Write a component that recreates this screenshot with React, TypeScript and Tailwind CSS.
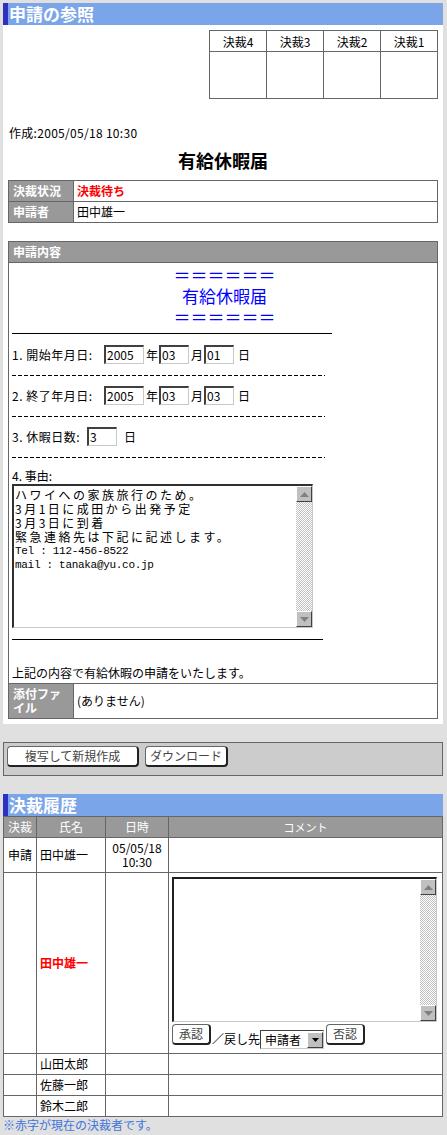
import React from 'react';

const font = "font-['Noto_Sans_CJK_JP','Noto_Sans_CJK_SC',sans-serif]";

function Field({ value, w }: { value: string; w: string }) {
  return (
    <span
      className={`inline-block h-[19px] ${w} border-t-2 border-l-2 border-[#404040] border-b border-r border-b-[#c8c8c8] border-r-[#c8c8c8] bg-white pl-[1px] text-[12px] leading-[16px]`}
    >
      {value}
    </span>
  );
}

function Arrow({ down }: { down?: boolean }) {
  return (
    <div className="flex h-[16px] w-[16px] shrink-0 items-center justify-center border border-t-white border-l-white border-b-[#404040] border-r-[#404040] bg-[#c0c0c0]">
      <svg width="9" height="5" viewBox="0 0 9 5">
        {down ? (
          <polygon points="0,0 9,0 4.5,5" fill="#808080" />
        ) : (
          <polygon points="0,5 9,5 4.5,0" fill="#808080" />
        )}
      </svg>
    </div>
  );
}

function ScrollBar() {
  return (
    <div className="flex w-[16px] shrink-0 flex-col">
      <Arrow />
      <div className="flex-1 bg-[repeating-conic-gradient(#c0c0c0_0%_25%,#ffffff_0%_50%)] bg-[length:2px_2px]" />
      <Arrow down />
    </div>
  );
}

function Btn({ children, w }: { children: React.ReactNode; w: string }) {
  return (
    <span
      className={`inline-flex h-[21px] ${w} shrink-0 items-center justify-center rounded-[4px] border border-[#666] border-b-2 border-r-2 border-b-[#222] border-r-[#222] bg-white text-[12px] text-[#444]`}
    >
      {children}
    </span>
  );
}

function TitleBar({ text }: { text: string }) {
  return (
    <div className="h-[22px] border-l-[5px] border-[#2f2fc4] bg-[#7ba5e9] pl-[1px] text-[17px] leading-[22px] font-bold text-white">
      {text}
    </div>
  );
}

function Dashes() {
  return (
    <div className="flex h-[20px] items-center">
      <div className="h-px w-[313px] bg-[repeating-linear-gradient(90deg,#000_0px_4px,transparent_4px_6px)]" />
    </div>
  );
}

export default function App() {
  const reason = [
    { t: 'ハワイへの家族旅行のため。', cjk: true },
    { t: '3月1日に成田から出発予定', cjk: true },
    { t: '3月3日に到着', cjk: true },
    { t: '緊急連絡先は下記に記述します。', cjk: true },
    { t: 'Tel  : 112-456-8522', cjk: false },
    { t: 'mail : tanaka@yu.co.jp', cjk: false },
  ];

  return (
    <div className={`min-h-screen w-[447px] bg-[#e0e0e0] pl-[3px] pt-[3px] text-[12px] text-black ${font}`}>
      {/* 申請の参照 */}
      <div className="w-[440px] bg-white pb-[5px]">
        <TitleBar text="申請の参照" />

        <div className="flex justify-end pr-[5px] pt-[5px]">
          <table className="border-collapse">
            <tbody>
              <tr>
                {['決裁4', '決裁3', '決裁2', '決裁1'].map((s) => (
                  <td key={s} className="h-[21px] w-[57px] border border-[#666] p-0 text-center leading-[19px]">
                    {s}
                  </td>
                ))}
              </tr>
              <tr>
                {[0, 1, 2, 3].map((i) => (
                  <td key={i} className="h-[47px] border border-[#666] p-0" />
                ))}
              </tr>
            </tbody>
          </table>
        </div>

        <div className="mt-[26px] pl-[6px] leading-[16px] tracking-[0.3px]">作成:2005/05/18 10:30</div>
        <div className="mt-[8px] text-center text-[18px] leading-[22px] font-bold">有給休暇届</div>

        <div className="mt-[9px] px-[5px]">
          <table className="w-full border-collapse">
            <tbody>
              <tr>
                <td className="h-[21px] w-[65px] border border-[#666] bg-[#999] p-0 pl-[4px] font-bold text-white">決裁状況</td>
                <td className="border border-[#666] p-0 pl-[3px] font-bold text-[#ff0000]">決裁待ち</td>
              </tr>
              <tr>
                <td className="h-[21px] w-[65px] border border-[#666] bg-[#999] p-0 pl-[4px] font-bold text-white">申請者</td>
                <td className="border border-[#666] p-0 pl-[3px]">田中雄一</td>
              </tr>
            </tbody>
          </table>
        </div>

        {/* 申請内容 */}
        <div className="mx-[5px] mt-[18px] border border-[#666]">
          <div className="h-[21px] border-b border-[#666] bg-[#999] pl-[4px] leading-[20px] font-bold text-white">申請内容</div>
          <div className="pl-[3px] pt-[1px]">
            <div className="text-center text-[17px] leading-[21px] text-[#0000ff]">
              <div>＝＝＝＝＝＝</div>
              <div>有給休暇届</div>
              <div>＝＝＝＝＝＝</div>
            </div>
            <div className="mt-[6px] h-px w-[320px] bg-black" />

            <div className="mt-[10px] flex h-[21px] items-center">
              <span className="w-[92px] shrink-0 tracking-[0.5px]">1. 開始年月日:</span>
              <Field value="2005" w="w-[40px]" />
              <span className="ml-[2px] mr-[1px]">年</span>
              <Field value="03" w="w-[30px]" />
              <span className="ml-[2px] mr-[1px]">月</span>
              <Field value="01" w="w-[30px]" />
              <span className="ml-[4px]">日</span>
            </div>
            <Dashes />

            <div className="flex h-[21px] items-center">
              <span className="w-[92px] shrink-0 tracking-[0.5px]">2. 終了年月日:</span>
              <Field value="2005" w="w-[40px]" />
              <span className="ml-[2px] mr-[1px]">年</span>
              <Field value="03" w="w-[30px]" />
              <span className="ml-[2px] mr-[1px]">月</span>
              <Field value="03" w="w-[30px]" />
              <span className="ml-[4px]">日</span>
            </div>
            <Dashes />

            <div className="flex h-[21px] items-center">
              <span className="w-[75px] shrink-0 tracking-[0.5px]">3. 休暇日数:</span>
              <Field value="3" w="w-[30px]" />
              <span className="ml-[7px]">日</span>
            </div>
            <Dashes />

            <div className="leading-[17px]">4. 事由:</div>
            <div className="flex h-[144px] w-[301px] border-t-2 border-l-2 border-[#303030] border-b border-r border-b-[#c8c8c8] border-r-[#c8c8c8]">
              <div className="flex-1 pl-[1px] pt-[2px] text-[12px] leading-[14px]">
                {reason.map((r) => (
                  <div
                    key={r.t}
                    className={r.cjk ? 'tracking-[2.5px]' : "font-['Liberation_Mono',monospace] text-[11px] tracking-[-0.3px]"}
                  >
                    {r.t}
                  </div>
                ))}
              </div>
              <ScrollBar />
            </div>
            <div className="mt-[11px] h-px w-[311px] bg-black" />
            <div className="mt-[24px] pb-[2px] leading-[17px]">上記の内容で有給休暇の申請をいたします。</div>
          </div>
          <div className="flex h-[35px] border-t border-[#666]">
            <div className="flex w-[65px] shrink-0 items-center border-r border-[#666] bg-[#999] pl-[4px] pr-[6px] leading-[14px] font-bold text-white">
              添付ファイル
            </div>
            <div className="flex items-center pl-[3px]">(ありません)</div>
          </div>
        </div>
      </div>

      {/* buttons */}
      <div className="mt-[18px] flex h-[34px] w-[440px] gap-[6px] border border-[#666] bg-[#cccccc] pl-[3px] pt-[3px]">
        <Btn w="w-[132px]">複写して新規作成</Btn>
        <Btn w="w-[83px]">ダウンロード</Btn>
      </div>

      {/* 決裁履歴 */}
      <div className="mt-[18px] w-[440px]">
        <TitleBar text="決裁履歴" />
        <table className="w-[440px] table-fixed border-collapse bg-white">
          <colgroup>
            <col className="w-[33px]" />
            <col className="w-[69px]" />
            <col className="w-[63px]" />
            <col />
          </colgroup>
          <tbody>
            <tr className="h-[21px] bg-[#999] text-white">
              <td className="border border-[#666] p-0 text-center">決裁</td>
              <td className="border border-[#666] p-0 text-center">氏名</td>
              <td className="border border-[#666] p-0 text-center">日時</td>
              <td className="border border-[#666] p-0 text-center text-[11px]">コメント</td>
            </tr>
            <tr className="h-[35px]">
              <td className="border border-[#666] p-0 text-center">申請</td>
              <td className="border border-[#666] p-0 pl-[3px]">田中雄一</td>
              <td className="border border-[#666] p-0 text-center leading-[14px]">
                05/05/18
                <br />
                10:30
              </td>
              <td className="border border-[#666] p-0" />
            </tr>
            <tr className="h-[181px]">
              <td className="border border-[#666] p-0" />
              <td className="border border-[#666] p-0 pl-[3px] font-bold text-[#ff0000]">田中雄一</td>
              <td className="border border-[#666] p-0" />
              <td className="border border-[#666] p-0 pl-[3px] pt-[4px] align-top">
                <div className="flex h-[145px] w-[265px] border-t-2 border-l-2 border-[#202020] border-b border-r border-b-[#c8c8c8] border-r-[#c8c8c8]">
                  <div className="flex-1" />
                  <ScrollBar />
                </div>
                <div className="mt-[2px] flex h-[25px] items-start">
                  <Btn w="w-[39px]">承認</Btn>
                  <span className="ml-[1px] mt-[6px] leading-[17px]">／戻し先</span>
                  <span className="mt-[6px] flex h-[19px] w-[64px] items-center border-t border-l border-[#404040] border-b border-r border-b-[#c8c8c8] border-r-[#c8c8c8] bg-white">
                    <span className="flex-1 pl-[4px] text-[12px] leading-[16px]">申請者</span>
                    <span className="flex h-[16px] w-[16px] items-center justify-center border border-t-white border-l-white border-b-[#404040] border-r-[#404040] bg-[#c0c0c0]">
                      <svg width="7" height="4" viewBox="0 0 7 4">
                        <polygon points="0,0 7,0 3.5,4" fill="#000" />
                      </svg>
                    </span>
                  </span>
                  <span className="ml-[2px]">
                    <Btn w="w-[39px]">否認</Btn>
                  </span>
                </div>
              </td>
            </tr>
            {['山田太郎', '佐藤一郎', '鈴木二郎'].map((n) => (
              <tr key={n} className="h-[21px]">
                <td className="border border-[#666] p-0" />
                <td className="border border-[#666] p-0 pl-[3px]">{n}</td>
                <td className="border border-[#666] p-0" />
                <td className="border border-[#666] p-0" />
              </tr>
            ))}
          </tbody>
        </table>
        <div className="leading-[16px] text-[#3b74dc]">※赤字が現在の決裁者です。</div>
      </div>
    </div>
  );
}
